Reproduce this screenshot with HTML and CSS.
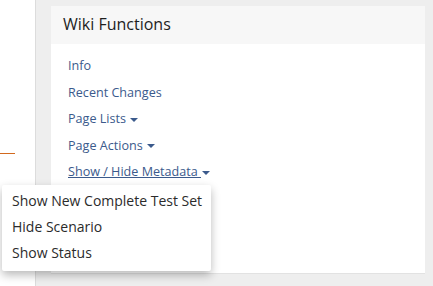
FILE: index.html
```html
<!DOCTYPE html>
<html lang="en">
<head>
    <meta charset="UTF-8">
    <title>Wiki Functions</title>
    <link rel="stylesheet" href="styles.css">
</head>
<body>
    <div class="sidebar">
        <div class="sidebar-rule"></div>
    </div>
    <div class="main">
        <div class="panel">
            <div class="panel-header">Wiki Functions</div>
            <ul class="panel-links">
                <li><a href="#">Info</a></li>
                <li><a href="#">Recent Changes</a></li>
                <li><a href="#">Page Lists <span class="caret"></span></a></li>
                <li><a href="#">Page Actions <span class="caret"></span></a></li>
                <li class="open">
                    <a href="#" class="hovered">Show / Hide Metadata </a><span class="caret"></span>
                    <ul class="dropdown-menu">
                        <li><a href="#">Show New Complete Test Set</a></li>
                        <li><a href="#">Hide Scenario</a></li>
                        <li><a href="#">Show Status</a></li>
                    </ul>
                </li>
            </ul>
        </div>
    </div>
</body>
</html>
```

FILE: styles.css
```css
html, body {
    height: 100%;
}
body {
    margin: 0;
    display: flex;
    font-family: "Open Sans", Arial, sans-serif;
    background: #fff;
    overflow: hidden;
}
.sidebar {
    width: 35px;
    flex-shrink: 0;
    border-right: 1px solid #dcdcdc;
    padding-top: 153px;
}
.sidebar-rule {
    width: 15px;
    height: 1px;
    background: #d2691e;
}
.main {
    flex: 1;
    background: #eeeeee;
    padding: 6px 8px 0 15px;
}
.panel {
    background: #fff;
    height: 268px;
    border-bottom: 1px solid #e2e2e2;
    box-sizing: border-box;
}
.panel-header {
    background: #f7f7f7;
    height: 38px;
    line-height: 36px;
    padding-left: 12px;
    font-size: 16px;
    color: #1e1e1e;
}
.panel-links {
    list-style: none;
    margin: 0;
    padding: 9px 0 0 17px;
}
.panel-links > li {
    position: relative;
    line-height: 26.5px;
    font-size: 12.6px;
}
.panel-links a {
    color: #3b5a8c;
    text-decoration: none;
}
.panel-links a.hovered {
    text-decoration: underline;
}
.caret {
    display: inline-block;
    width: 0;
    height: 0;
    margin-left: 1px;
    vertical-align: middle;
    border-top: 4px solid #3b5a8c;
    border-left: 4px solid transparent;
    border-right: 4px solid transparent;
}
.dropdown-menu {
    position: absolute;
    top: 26px;
    left: -66px;
    width: 209px;
    list-style: none;
    margin: 0;
    padding: 3px 0 5px;
    background: #fff;
    box-shadow: 0 4px 10px rgba(0, 0, 0, 0.28);
    border-radius: 2px;
}
.dropdown-menu li {
    line-height: 26px;
    font-size: 14px;
}
.dropdown-menu a {
    display: block;
    padding-left: 10px;
    color: #2b2b2b;
}
```
